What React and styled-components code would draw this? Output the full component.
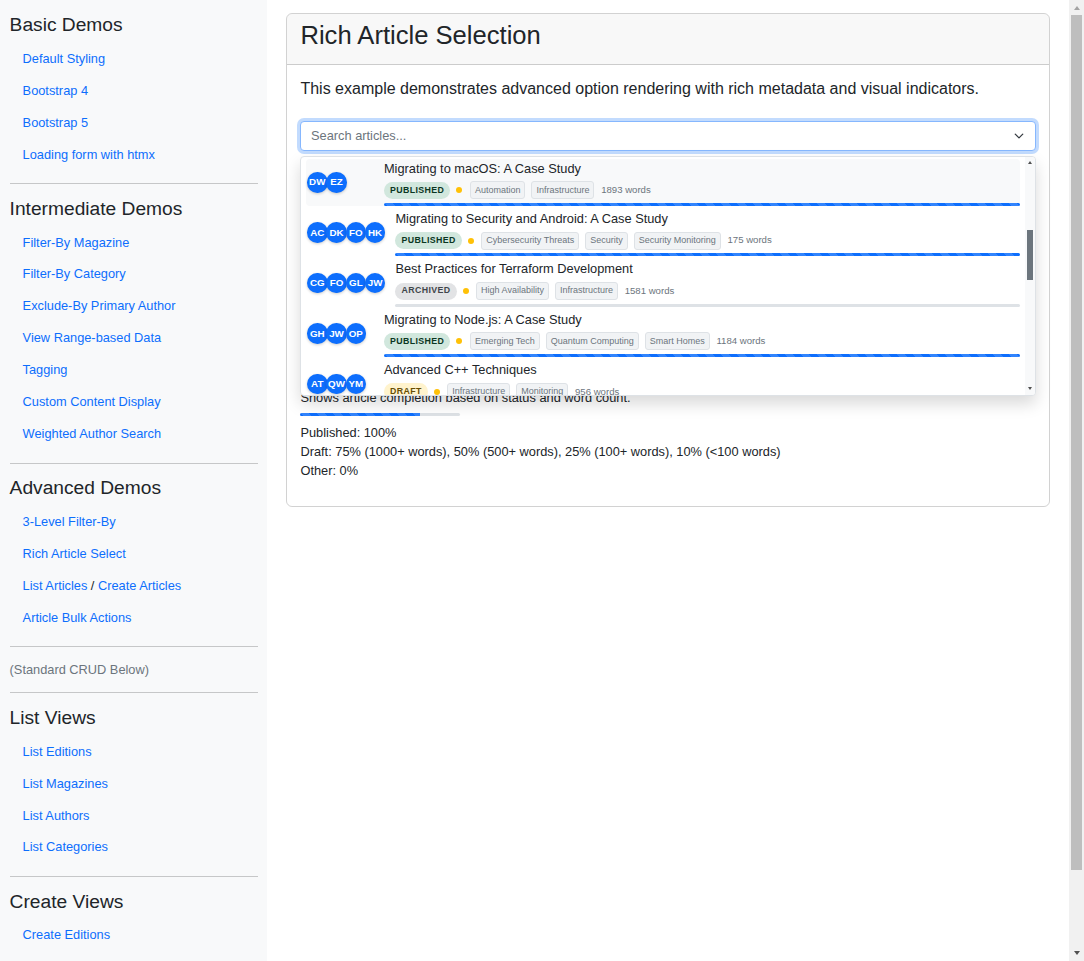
import React from 'react'
import styled, { createGlobalStyle } from 'styled-components'

const GlobalStyle = createGlobalStyle`
    html, body {
        margin: 0;
        padding: 0;
        background: #fff;
        overflow: hidden;
    }
    body {
        font-family: "Liberation Sans", Arial, sans-serif;
        color: #212529;
        font-size: 16px;
        line-height: 1.5;
    }
    * {
        box-sizing: border-box;
    }
`

const navSections = [
    { title: 'Basic Demos', links: [['Default Styling'], ['Bootstrap 4'], ['Bootstrap 5'], ['Loading form with htmx']] },
    { title: 'Intermediate Demos', links: [['Filter-By Magazine'], ['Filter-By Category'], ['Exclude-By Primary Author'], ['View Range-based Data'], ['Tagging'], ['Custom Content Display'], ['Weighted Author Search']] },
    { title: 'Advanced Demos', links: [['3-Level Filter-By'], ['Rich Article Select'], ['List Articles', 'Create Articles'], ['Article Bulk Actions']] },
    { note: '(Standard CRUD Below)' },
    { title: 'List Views', links: [['List Editions'], ['List Magazines'], ['List Authors'], ['List Categories']] },
    { title: 'Create Views', links: [['Create Editions']] },
]

const articles = [
    { title: 'Migrating to macOS: A Case Study', status: 'published', authors: ['DW', 'EZ'], tags: ['Automation', 'Infrastructure'], words: 1893, active: true },
    { title: 'Migrating to Security and Android: A Case Study', status: 'published', authors: ['AC', 'DK', 'FO', 'HK'], tags: ['Cybersecurity Threats', 'Security', 'Security Monitoring'], words: 175 },
    { title: 'Best Practices for Terraform Development', status: 'archived', authors: ['CG', 'FO', 'GL', 'JW'], tags: ['High Availability', 'Infrastructure'], words: 1581 },
    { title: 'Migrating to Node.js: A Case Study', status: 'published', authors: ['GH', 'JW', 'OP'], tags: ['Emerging Tech', 'Quantum Computing', 'Smart Homes'], words: 1184 },
    { title: 'Advanced C++ Techniques', status: 'draft', authors: ['AT', 'QW', 'YM'], tags: ['Infrastructure', 'Monitoring'], words: 956 },
]

const statusColours = {
    published: { bg: '#d1e7dd', fg: '#0a3622' },
    draft: { bg: '#fff3cd', fg: '#664d03' },
    archived: { bg: '#e2e3e5', fg: '#41464b' },
}

const fillFor = { published: '100%', draft: '75%', archived: '0%' }

const App = () => (
    <>
        <GlobalStyle />
        <Window>
            <Page>
                <Sidebar>
                    {navSections.map((section, i) => (
                        <React.Fragment key={section.title || section.note}>
                            {i > 0 && <Rule />}
                            {section.note ? (
                                <NavNote>{section.note}</NavNote>
                            ) : (
                                <>
                                    <NavTitle>{section.title}</NavTitle>
                                    {section.links.map(([first, second]) => (
                                        <NavItem key={first}>
                                            <NavLink href="#">{first}</NavLink>
                                            {second && <> / <NavLink href="#">{second}</NavLink></>}
                                        </NavItem>
                                    ))}
                                </>
                            )}
                        </React.Fragment>
                    ))}
                </Sidebar>
                <Main>
                    <Card>
                        <CardHeader>Rich Article Selection</CardHeader>
                        <CardBody>
                            <Intro>This example demonstrates advanced option rendering with rich metadata and visual indicators.</Intro>
                            <SelectWrap>
                                <SearchInput placeholder="Search articles..." readOnly />
                                <Chevron viewBox="0 0 16 16">
                                    <path fill="none" stroke="#343a40" strokeLinecap="round" strokeLinejoin="round" strokeWidth="2" d="m2 5 6 6 6-6" />
                                </Chevron>
                                <Menu>
                                    <MenuList>
                                        {articles.map(article => (
                                            <Row key={article.title} $active={article.active}>
                                                <Avatars>
                                                    {article.authors.map(a => <Avatar key={a}>{a}</Avatar>)}
                                                </Avatars>
                                                <RowBody>
                                                    <RowTitle>{article.title}</RowTitle>
                                                    <Meta>
                                                        <StatusPill $status={article.status}>{article.status}</StatusPill>
                                                        <Dot />
                                                        {article.tags.map(tag => <Tag key={tag}>{tag}</Tag>)}
                                                        <Words>{article.words} words</Words>
                                                    </Meta>
                                                    <Track>
                                                        <Fill style={{ width: fillFor[article.status] }} />
                                                    </Track>
                                                </RowBody>
                                            </Row>
                                        ))}
                                    </MenuList>
                                    <MenuBar>
                                        <Arrow $up $size={3} $colour="#505050" />
                                        <MenuThumb />
                                        <Arrow $size={3} $colour="#505050" />
                                    </MenuBar>
                                </Menu>
                            </SelectWrap>
                            <Explain>Shows article completion based on status and word count.</Explain>
                            <LegendTrack>
                                <Fill style={{ width: '75%' }} />
                            </LegendTrack>
                            <Legend>Published: 100%</Legend>
                            <Legend>Draft: 75% (1000+ words), 50% (500+ words), 25% (100+ words), 10% (&lt;100 words)</Legend>
                            <Legend>Other: 0%</Legend>
                        </CardBody>
                    </Card>
                </Main>
            </Page>
            <PageBar>
                <Arrow $up $size={4} $colour="#a3a3a3" />
                <PageThumb />
                <Arrow $size={4} $colour="#505050" />
            </PageBar>
        </Window>
    </>
)

const Window = styled.div`
    display: flex;
    height: 961px;
    overflow: hidden;
`

const Page = styled.div`
    flex: 1;
    min-width: 0;
    display: flex;
    align-items: stretch;
`

const PageBar = styled.div`
    flex: 0 0 15px;
    display: flex;
    flex-direction: column;
    align-items: center;
    justify-content: space-between;
    padding: 6px 0 6px;
    background: #f1f1f1;
`

const PageThumb = styled.div`
    width: 11px;
    flex: 0 0 855px;
    margin: 5px 0 auto;
    background: #bebebe;
`

const Arrow = styled.span`
    flex-shrink: 0;
    width: 0;
    height: 0;
    border-left: ${props => props.$size - 0.5}px solid transparent;
    border-right: ${props => props.$size - 0.5}px solid transparent;
    border-${props => props.$up ? 'bottom' : 'top'}: ${props => props.$size}px solid ${props => props.$colour};
`

const Sidebar = styled.nav`
    flex: 0 0 25%;
    padding: 13.3px 9.6px 0;
    background: #f8f9fa;
`

const Rule = styled.hr`
    margin: 12.9px 0;
    border: 0;
    border-top: 1px solid #c6c7c8;
`

const NavTitle = styled.h4`
    margin: 0 0 6.2px;
    font-size: 19.2px;
    font-weight: 400;
    line-height: 1.2;
`

const NavItem = styled.div`
    padding: 6.36px 13px;
    font-size: 12.8px;
    line-height: 19.2px;
`

const NavLink = styled.a`
    color: #0d6efd;
    text-decoration: none;
`

const NavNote = styled.div`
    font-size: 12.8px;
    line-height: 19.2px;
    color: #6c757d;
`

const Main = styled.main`
    flex: 1;
    min-width: 0;
    padding: 13px 19.2px;
`

const Card = styled.section`
    height: 494px;
    border: 1px solid rgba(0, 0, 0, 0.175);
    border-radius: 6px;
`

const CardHeader = styled.h2`
    margin: 0;
    height: 51px;
    padding: 6px 13px 0;
    border-bottom: 1px solid rgba(0, 0, 0, 0.175);
    border-radius: 5px 5px 0 0;
    background: rgba(33, 37, 41, 0.03);
    font-size: 25.6px;
    font-weight: 400;
    line-height: 1.2;
`

const CardBody = styled.div`
    padding: 12px 13px;
`

const Intro = styled.p`
    margin: 0 0 20px;
    font-size: 16px;
    line-height: 24px;
`

const SelectWrap = styled.div`
    position: relative;
    height: 30px;
    margin-bottom: 236.5px;
`

const SearchInput = styled.input`
    display: block;
    width: 100%;
    height: 30px;
    padding: 0 36px 2px 9.6px;
    border: 1px solid #86b7fe;
    border-radius: 4px;
    outline: 0;
    box-shadow: 0 0 0 3px rgba(13, 110, 253, 0.25);
    font-family: inherit;
    font-size: 12.8px;
    color: #212529;
    &::placeholder {
        color: #6c757d;
        opacity: 1;
    }
`

const Chevron = styled.svg`
    position: absolute;
    top: 10px;
    right: 11.5px;
    width: 10px;
    height: 10px;
`

const Menu = styled.div`
    position: absolute;
    top: 35px;
    left: 0;
    right: 0;
    z-index: 5;
    display: flex;
    height: 240px;
    overflow: hidden;
    background: #fff;
    border: 1px solid #dee2e6;
    border-radius: 4px;
    box-shadow: 0 8px 16px rgba(0, 0, 0, 0.15);
`

const MenuList = styled.div`
    flex: 1;
    min-width: 0;
    padding: 1.7px 5px 0;
    overflow: hidden;
`

const MenuBar = styled.div`
    flex: 0 0 10px;
    display: flex;
    flex-direction: column;
    align-items: center;
    justify-content: space-between;
    padding: 4px 0 5px;
    background: #f8f9fa;
`

const MenuThumb = styled.div`
    width: 6px;
    flex: 0 0 50px;
    margin: 66px 0 auto;
    background: #6c757d;
`

const Row = styled.div`
    display: flex;
    align-items: center;
    height: 47.4px;
    margin-bottom: 3px;
    padding-left: 0.5px;
    border-radius: 4px;
    background: ${props => props.$active ? '#f8f9fa' : 'transparent'};
`

const Avatars = styled.div`
    display: flex;
    flex-shrink: 0;
    min-width: 67px;
    margin-right: 10px;
`

const Avatar = styled.span`
    display: flex;
    align-items: center;
    justify-content: center;
    width: 20.6px;
    height: 20.6px;
    margin-left: -1.3px;
    border-radius: 50%;
    background: #0d6efd;
    color: #fff;
    font-size: 9.8px;
    font-weight: 700;
    line-height: 1;
    box-shadow: 0 1px 3px rgba(0, 0, 0, 0.2);
    &:first-child {
        margin-left: 0;
    }
`

const RowBody = styled.div`
    flex: 1;
    min-width: 0;
    align-self: stretch;
    display: flex;
    flex-direction: column;
`

const RowTitle = styled.div`
    font-size: 12.8px;
    line-height: 19.2px;
    color: #212529;
    white-space: nowrap;
`

const Meta = styled.div`
    display: flex;
    align-items: center;
    height: 22px;
    margin-top: 1.4px;
`

const StatusPill = styled.span`
    display: inline-flex;
    align-items: center;
    height: 17px;
    padding: 0 6px;
    border-radius: 9px;
    background: ${props => statusColours[props.$status].bg};
    color: ${props => statusColours[props.$status].fg};
    font-size: 8.8px;
    font-weight: 700;
    letter-spacing: 0.4px;
    text-transform: uppercase;
`

const Dot = styled.span`
    width: 6px;
    height: 6px;
    margin: 0 7.5px 0 6px;
    border-radius: 50%;
    background: #ffc107;
`

const Tag = styled.span`
    display: inline-flex;
    align-items: center;
    height: 18px;
    margin-right: 6px;
    padding: 0 4px;
    border: 1px solid #dee2e6;
    border-radius: 3px;
    background: #f1f3f5;
    color: #6c757d;
    font-size: 9px;
`

const Words = styled.span`
    margin-left: 0.7px;
    color: #6c757d;
    font-size: 9.6px;
`

const Track = styled.div`
    height: 3px;
    margin-top: 1.8px;
    border-radius: 2px;
    overflow: hidden;
    background: #dee2e6;
`

const Fill = styled.div`
    height: 100%;
    background-color: #0d6efd;
    background-image: linear-gradient(45deg, rgba(255,255,255,.15) 25%, transparent 25%, transparent 50%, rgba(255,255,255,.15) 50%, rgba(255,255,255,.15) 75%, transparent 75%, transparent);
    background-size: 16px 16px;
`

const Explain = styled.p`
    margin: 0;
    font-size: 12.8px;
    line-height: 19px;
`

const LegendTrack = styled.div`
    width: 160px;
    height: 3px;
    margin: 6.5px 0 7px;
    border-radius: 2px;
    overflow: hidden;
    background: #dee2e6;
`

const Legend = styled.div`
    font-size: 12.8px;
    line-height: 19px;
`

export default App
